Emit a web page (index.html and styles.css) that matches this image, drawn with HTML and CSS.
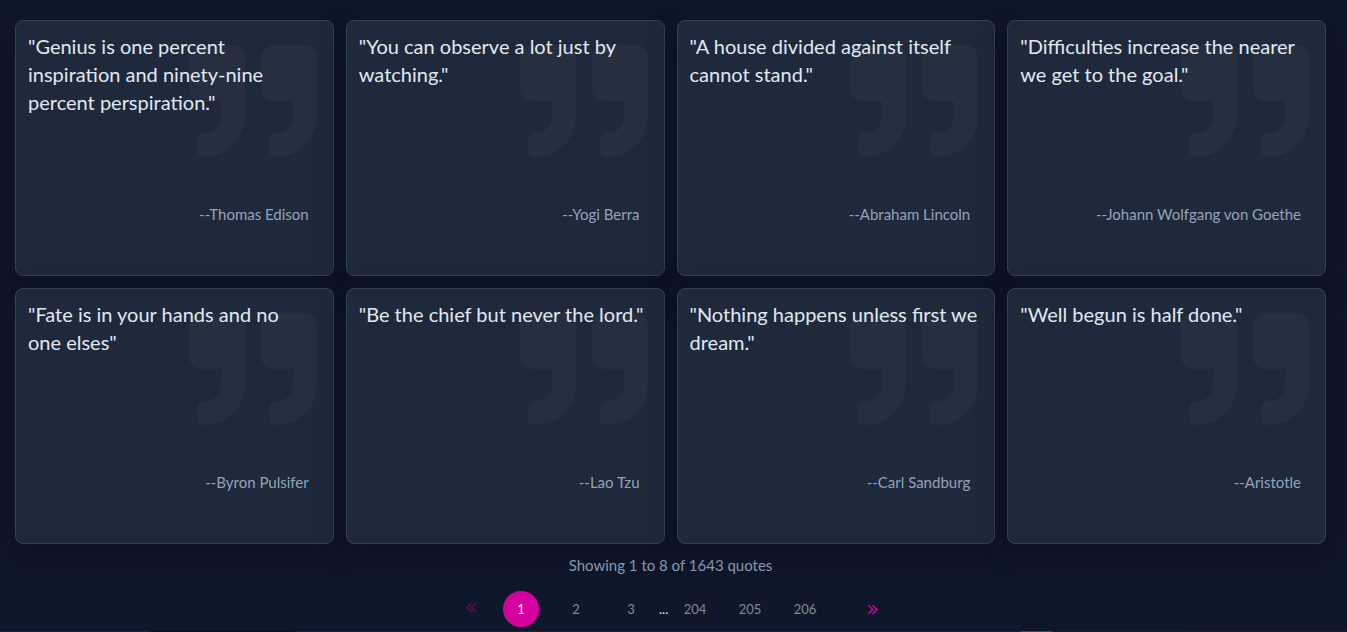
FILE: index.html
```html
<!DOCTYPE html>
<html lang="en">
<head>
<meta charset="utf-8">
<meta name="viewport" content="width=device-width, initial-scale=1">
<title>Quotes</title>
<link rel="stylesheet" href="styles.css">
</head>
<body>
<svg class="sprite" aria-hidden="true">
  <symbol id="quote" viewBox="0 0 512 512"><path d="M464 32H336c-26.500 0-48 21.500-48 48v128c0 26.500 21.500 48 48 48h80v64c0 35.300-28.700 64-64 64h-8c-13.300 0-24 10.700-24 24v48c0 13.300 10.700 24 24 24h8c88.400 0 160-71.600 160-160V80c0-26.500-21.500-48-48-48zm-288 0H48C21.500 32 0 53.500 0 80v128c0 26.500 21.500 48 48 48h80v64c0 35.300-28.700 64-64 64h-8c-13.300 0-24 10.700-24 24v48c0 13.300 10.700 24 24 24h8c88.400 0 160-71.600 160-160V80c0-26.500-21.500-48-48-48z"/></symbol>
</svg>
<main class="page">
  <section class="quotes">
    <article class="card"><svg class="mark"><use href="#quote"/></svg><p class="text">"Genius is one percent inspiration and ninety-nine percent perspiration."</p><p class="author">--Thomas Edison</p></article>
    <article class="card"><svg class="mark"><use href="#quote"/></svg><p class="text">"You can observe a lot just by watching."</p><p class="author">--Yogi Berra</p></article>
    <article class="card"><svg class="mark"><use href="#quote"/></svg><p class="text">"A house divided against itself cannot stand."</p><p class="author">--Abraham Lincoln</p></article>
    <article class="card"><svg class="mark"><use href="#quote"/></svg><p class="text">"Difficulties increase the nearer we get to the goal."</p><p class="author">--Johann Wolfgang von Goethe</p></article>
    <article class="card"><svg class="mark"><use href="#quote"/></svg><p class="text">"Fate is in your hands and no<br>one elses"</p><p class="author">--Byron Pulsifer</p></article>
    <article class="card"><svg class="mark"><use href="#quote"/></svg><p class="text">"Be the chief but never the lord."</p><p class="author">--Lao Tzu</p></article>
    <article class="card"><svg class="mark"><use href="#quote"/></svg><p class="text">"Nothing happens unless first we dream."</p><p class="author">--Carl Sandburg</p></article>
    <article class="card"><svg class="mark"><use href="#quote"/></svg><p class="text">"Well begun is half done."</p><p class="author">--Aristotle</p></article>
  </section>
  <p class="summary">Showing 1 to 8 of 1643 quotes</p>
  <nav class="pager" aria-label="Pagination">
    <button class="arrow prev" disabled aria-label="Previous page"><svg class="chevrons" viewBox="0 0 10 10"><path d="M5 1 1 5l4 4M9 1 5 5l4 4"/></svg></button>
    <button class="number current" aria-current="page">1</button>
    <button class="number">2</button>
    <button class="number">3</button>
    <span class="dots">...</span>
    <button class="number">204</button>
    <button class="number">205</button>
    <button class="number">206</button>
    <button class="arrow next" aria-label="Next page"><svg class="chevrons" viewBox="0 0 10 10"><path d="m1 1 4 4-4 4M5 1l4 4-4 4"/></svg></button>
  </nav>
</main>
<div class="edge"></div>
</body>
</html>
```
FILE: styles.css
```css
* { box-sizing: border-box; }
body {
  margin: 0;
  min-height: 100vh;
  background: #0f172a;
  color: #e2e8f0;
  font-family: Lato, "Liberation Sans", sans-serif;
  overflow: hidden;
}
p { margin: 0; }
.sprite { position: absolute; width: 0; height: 0; }
.page { padding: 20px 21px 0 15px; }
.quotes {
  display: grid;
  grid-template-columns: repeat(4, minmax(0, 1fr));
  gap: 12px;
}
.card {
  position: relative;
  display: flex;
  flex-direction: column;
  min-height: 256px;
  padding: 11px 12px 12px;
  border: 1px solid #334155;
  border-radius: 8px;
  background: #1e293b;
  box-shadow: 0 10px 30px rgba(12, 10, 29, 0.4);
}
.mark {
  position: absolute;
  top: 16px;
  right: 16px;
  width: 128px;
  height: 128px;
  fill: #252f40;
}
.text {
  position: relative;
  min-height: 168px;
  font-size: 20px;
  line-height: 28px;
}
.author {
  position: relative;
  padding: 2px 12px 0;
  color: #94a3b8;
  font-size: 15px;
  line-height: 24px;
  text-align: right;
}
.summary {
  padding-top: 9px;
  color: #94a3b8;
  font-size: 15px;
  line-height: 24px;
  text-align: center;
}
.pager {
  display: flex;
  justify-content: center;
  align-items: center;
  height: 36px;
  margin-top: 14px;
}
button {
  padding: 0;
  border: 0;
  background: none;
  color: #808998;
  font: inherit;
}
.number {
  width: 36px;
  height: 36px;
  margin-right: 19px;
  border-radius: 50%;
  font-size: 13px;
}
.number.current { background: #d6009e; color: #fff; }
.number:has(+ .dots) { margin-right: 10px; }
.dots { width: 10px; margin-right: 8px; font-size: 13px; }
.arrow {
  display: flex;
  justify-content: center;
  width: 60px;
  color: #d6009e;
}
.prev { width: 64px; padding-bottom: 4px; opacity: 0.4; }
.chevrons {
  width: 11px;
  height: 11px;
  fill: none;
  stroke: currentColor;
  stroke-width: 1.3;
}
.edge {
  position: fixed;
  right: 0;
  bottom: 0;
  left: 0;
  height: 1px;
  background: linear-gradient(90deg, #1b252c 150px, #09111b 150px 295px, #1b252c 295px 1021px, #44454d 1021px 1052px, #3c0a30 1052px 1190px, #241a2d 1190px);
}
```
